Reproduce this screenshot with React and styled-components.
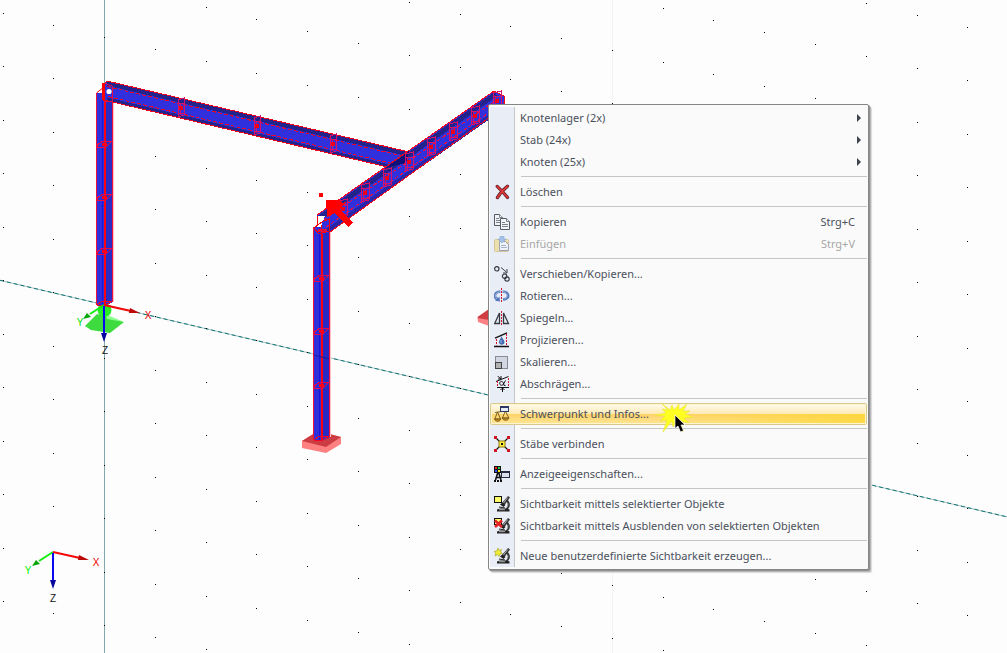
import React from "react";
import styled, { createGlobalStyle } from "styled-components";

const GlobalStyle = createGlobalStyle`
  body {
    margin: 0;
    background: #fdfdfd;
    font-family: "Noto Sans", "Open Sans", sans-serif;
  }
`;

const Workspace = styled.main`
  position: relative;
  min-height: 100vh;
  overflow: hidden;
  display: flex;
`;

const Viewport = styled.svg`
  flex: 1;
  min-width: 0;
  display: block;
`;

const AxisLabel = styled.text`
  font-family: "Liberation Sans", sans-serif;
  font-size: 10px;
  text-anchor: middle;
  fill: ${(p) => p.$color};
`;

const ContextMenu = styled.div`
  position: absolute;
  left: 488px;
  top: 104px;
  box-sizing: border-box;
  width: 381px;
  padding: 2px 1px;
  border: 1px solid #868686;
  border-radius: 2px;
  background: #fafafa;
  box-shadow: 1px 1px 0 #909090, 2px 2px 1px #b4b4b4, 3px 3px 1px #dcdcdc;
`;

const MenuList = styled.div`
  display: flex;
  flex-direction: column;
  background: linear-gradient(to right, #e9edf6 24px, #c5c5c5 24px, #c5c5c5 25px, transparent 25px);
`;

const Divider = styled.hr`
  box-sizing: border-box;
  width: auto;
  height: 1px;
  margin: 3px 0 4px 31px;
  border: 0;
  background: #c5c5c5;
`;

const MenuItem = styled.button`
  box-sizing: border-box;
  display: grid;
  grid-template-columns: 30px 1fr auto;
  align-items: center;
  width: 100%;
  height: 22px;
  padding: 0 12px 0 0;
  border: 0;
  border-radius: 2px;
  background: ${(p) =>
    p.$active
      ? "linear-gradient(to right, rgba(255,216,50,0) 45%, rgba(255,214,45,0.75)) 0 11px / 100% 11px no-repeat, linear-gradient(#fffdf3, #fdeab5 49%, #fed268 50%, #fee798)"
      : "transparent"};
  box-shadow: ${(p) => (p.$active ? "inset 0 0 0 1px #d9c98d, inset 0 0 0 2px #fff6d0" : "none")};
  color: ${(p) => (p.disabled ? "#a7a7a7" : "#4b505c")};
  font-family: inherit;
  font-size: 11px;
  line-height: 16px;
  text-align: left;
  white-space: nowrap;
`;

const IconCell = styled.span`
  display: flex;
  padding-left: 4px;
  opacity: ${(p) => (p.$faded ? 0.6 : 1)};
`;

const Shortcut = styled.span`
  font-size: 11px;
`;

const SubmenuArrow = styled.span`
  width: 0;
  height: 0;
  margin-right: -8px;
  border-style: solid;
  border-width: 4px 0 4px 4px;
  border-color: transparent transparent transparent #3d424d;
  transform: translateX(2px);
`;

const Pointer = styled.svg`
  position: absolute;
  left: 654px;
  top: 402px;
  pointer-events: none;
`;

/* ---------- menu icons, all on a 16 x 16 grid ---------- */

const Microscope = () => (
  <g>
    <path d="M14 0L16 1.5L10.5 9L7.5 7.5Z" fill="#333" />
    <path d="M13.6 1.6L9.2 7.4" stroke="#b5b5b5" strokeWidth="1" />
    <path d="M6 8.5L8.5 6.5L11.5 9L9.5 11Z" fill="#222" />
    <path d="M13 4.5C16 8 15 11 12.5 13.5" stroke="#333" strokeWidth="2" fill="none" />
    <path d="M13.8 7C14.5 9 13.5 11 12 12.5" stroke="#999" strokeWidth="0.6" fill="none" />
    <path d="M5 11L11 12" stroke="#222" strokeWidth="1.2" />
    <path d="M3 13.5L6 12.5H13L15.5 13.5V15.5H3Z" fill="#222" />
    <path d="M5 13.7H11" stroke="#bbb" strokeWidth="0.9" />
  </g>
);

const RedDash = ({ x, y1, y2 }) => (
  <path d={`M${x} ${y1}V${y2}`} stroke="#d3122b" strokeWidth="1" strokeDasharray="2 1" />
);

const icons = {
  remove: (
    <g fill="none" strokeLinecap="round">
      <path d="M3.2 2.4C6 5 10 9 13.5 13.5M13.5 2.2C10 5 6 9 3.4 13.6" stroke="#5c1a22" strokeWidth="3.2" />
      <path d="M3.2 2.4C6 5 10 9 13.5 13.5M13.5 2.2C10 5 6 9 3.4 13.6" stroke="#e0393c" strokeWidth="1.8" />
    </g>
  ),
  copy: (
    <g stroke="#555b61" fill="#f1f3f6">
      <path d="M0.5 0.5H5.5L8.5 3.5V11.5H0.5Z" />
      <path d="M5.5 0.5V3.5H8.5M2 4.5H5M2 6.5H6M2 8.5H6" stroke="#7c8289" />
      <path d="M6.5 4.5H12.5L15.5 7.5V15.5H6.5Z" />
      <path d="M12.5 4.5V7.5H15.5M8 8.5H11M8 10.5H14M8 12.5H14" stroke="#7c8289" />
    </g>
  ),
  paste: (
    <g>
      <rect x="0.5" y="3.5" width="14" height="12" rx="1" fill="#edd67d" stroke="#c3ad5c" />
      <path d="M5.5 5.5H11.5L14.5 8.5V14.5H5.5Z" fill="#f4f6fa" stroke="#687083" />
      <path d="M7 9.5H12M7 11.5H13" stroke="#7c8ba3" />
      <path d="M6 0.5H10V3H12L8 7L4 3H6Z" fill="#79a5df" stroke="#4776bb" strokeWidth="0.6" />
    </g>
  ),
  move: (
    <g fill="none" stroke="#383d48">
      <circle cx="2.8" cy="2.8" r="2.2" strokeWidth="1.2" />
      <path d="M7 1.5L12.5 6.2M13 3V7H9" />
      <circle cx="10.6" cy="10.2" r="2.2" strokeWidth="1.2" />
      <circle cx="13" cy="13" r="2.2" strokeWidth="1.2" />
    </g>
  ),
  rotate: (
    <g fill="none">
      <path d="M4 11.500C-1 9.500 0 3.500 7.500 3.500S16 9.500 11 11.200L9 11.600" stroke="#5478bb" strokeWidth="2.6" />
      <path d="M3 10.800C-0.500 8.500 1.500 3.500 7.500 3.500S15 9.500 10.500 11.200" stroke="#a3bce6" strokeWidth="1" />
      <path d="M1 12.800L6 13.500L5.500 8.500Z" fill="#5478bb" />
      <path d="M7.5 0V15" stroke="#e9edf6" strokeWidth="2" />
      <RedDash x={7.5} y1={0} y2={15} />
    </g>
  ),
  mirror: (
    <g fill="none" stroke="#333842">
      <path d="M0.7 13.5H5.5V3Z M9.5 3V13.5H14.5Z" strokeWidth="1.3" />
      <RedDash x={7.5} y1={1} y2={16} />
    </g>
  ),
  project: (
    <g fill="none">
      <path d="M1 6.2L13 0.8M0 14.5H15" stroke="#111" strokeWidth="1.3" />
      <RedDash x={2.5} y1={7} y2={13.5} />
      <RedDash x={12.5} y1={2} y2={13.5} />
      <path d="M7.500 4C8 6.500 10.500 8 10.500 10C10.500 13.500 5 13.500 5 10C5 8 7 6.500 7.500 4Z" fill="#4369b3" />
      <path d="M7 8V11" stroke="#9eb9e8" />
    </g>
  ),
  scale: (
    <g>
      <rect x="1.5" y="2.5" width="12" height="12" fill="#d2d6e2" stroke="#30343c" strokeDasharray="1 1" />
      <rect x="1.5" y="8.5" width="6" height="6" fill="#b2b2b2" stroke="#444" />
    </g>
  ),
  bevel: (
    <g fill="none" stroke="#111">
      <path d="M2 5.5L14.5 0.5M3 11.5H15M8.5 16V12M6.5 14L8.5 12L10.5 14M3.5 0L7 3M7 0V3H4" />
      <path d="M11.5 4.5L9.5 8C8.5 10 5.5 9.5 5.7 7.2C5.9 5 8.7 4.7 9.3 7L10 9.4H11.5" />
      <RedDash x={3.5} y1={5} y2={11} />
      <RedDash x={14.5} y1={2} y2={11} />
    </g>
  ),
  balance: (
    <g fill="none" stroke="#806018">
      <path d="M1 6.5L14 4.5M3.5 6L0.8 13H6.5L3.5 6M11.5 5L8.3 12H14.8L11.5 5" />
      <path d="M0.5 13H6.8C6 16 1.5 16 0.5 13ZM8 12H15C14 15 9.5 15 8 12Z" fill="#c58d22" />
      <rect x="6.5" y="0.5" width="8" height="5" fill="#e5eaf8" stroke="#2b3765" />
      <path d="M6 1H15" stroke="#2b3765" strokeWidth="2" />
    </g>
  ),
  connect: (
    <g>
      <path d="M1 1L15 15M15 1L1 15" stroke="#111" strokeWidth="1.2" />
      <path d="M0 0H3V3H0ZM13 0H16V3H13ZM0 13H3V16H0ZM13 13H16V16H13Z" fill="#d31420" />
      <rect x="5" y="5" width="6" height="6" fill="#fff23a" stroke="#8d7a16" />
      <rect x="7" y="7" width="2" height="2" fill="#111" />
    </g>
  ),
  display: (
    <g>
      <path d="M0 0H7V7H0Z" fill="#111" />
      <path d="M1 1H3V3H1Z" fill="#f52727" />
      <path d="M4 1H6V3H4Z" fill="#23cf45" />
      <path d="M1 4H3V6H1Z" fill="#3154ff" />
      <path d="M4 4H6V6H4Z" fill="#ffe523" />
      <path d="M1.500 14L3.500 7.500H5L7 14M2.500 11.500H6.500" stroke="#111" strokeWidth="1.6" fill="none" />
      <path d="M0 15H9" stroke="#111" strokeWidth="2" strokeDasharray="2 1" />
      <rect x="7.5" y="5.5" width="8" height="6" fill="#dcdfe9" stroke="#252b42" />
      <path d="M7 6H16" stroke="#252b42" strokeWidth="2" />
    </g>
  ),
  show: (
    <g>
      <Microscope />
      <rect x="0.5" y="0.5" width="7" height="6" fill="#ffff69" stroke="#111" />
    </g>
  ),
  hide: (
    <g>
      <Microscope />
      <rect x="0.5" y="0.5" width="7" height="6" fill="#ffff69" stroke="#111" />
      <path d="M1 2.500L8 9M8 2.500L1 9" stroke="#e12228" strokeWidth="2.6" />
    </g>
  ),
  create: (
    <g>
      <Microscope />
      <path d="M4 0L5 2.5L7.5 1.5L6.5 4L8.5 5.5L6 6L5 8.5L3.5 6.5L1 8L1.8 5.2L0 3.5L2.8 3Z" fill="#efed32" stroke="#a9a92b" strokeWidth="0.7" />
    </g>
  ),
};

const Icon = ({ name }) => (
  <svg width="16" height="16" viewBox="0 0 16 16" aria-hidden="true">
    {icons[name]}
  </svg>
);

/* ---------- 3D model ---------- */

const COLUMN_STEP = 50.78;
const ROW_STEP = 53.5;
const gridDots = [];
for (let i = 0; i < 60; i++) {
  const first = (13 + 12 * i) % ROW_STEP;
  for (let j = 0; j < 40; j++) {
    gridDots.push([Math.floor(3 + COLUMN_STEP * i), Math.floor(first + ROW_STEP * j)]);
  }
}

const Post = ({ x, top, bottom, rings }) => (
  <g shapeRendering="crispEdges">
    <path d={`M${x - 7} ${top}H${x + 9}V${bottom - 3}L${x + 1} ${bottom + 1}H${x - 7}Z`} fill="#2f2fdc" />
    <path d={`M${x + 5} ${top + 2}V${bottom - 3}`} stroke="#2a2ac4" strokeWidth="6" />
    <path d={`M${x - 1.5} ${top}V${bottom}`} stroke="#1717df" />
    <path d={`M${x + 9.5} ${top + 2}V${bottom - 3}`} stroke="#ffc0c8" />
    <path d={`M${x - 7.5} ${top}V${bottom}M${x + 8.5} ${top + 2}V${bottom - 3}`} stroke="#f0103c" />
    <path d={`M${x + 0.5} ${top - 3}V${bottom}`} stroke="#ff0010" strokeWidth="2" />
    <path d={`M${x - 7} ${bottom}L${x - 2} ${bottom - 4}L${x + 8} ${bottom - 4}L${x} ${bottom + 1}Z`} fill="none" stroke="#f30722" />
    {rings.map((y) => (
      <g key={y} stroke="#e80b4b" fill="none">
        <path d={`M${x - 7} ${y + 1}L${x - 1} ${y - 3}L${x + 8} ${y - 3}L${x + 2} ${y + 3}L${x - 6} ${y + 4}Z`} />
        <path d={`M${x - 2} ${y + 0.5}H${x + 3}`} stroke="#ff0018" strokeWidth="3" />
      </g>
    ))}
  </g>
);

const Joint = ({ x, y, w = 3 }) => (
  <g fill="none" stroke="#d8126b">
    <path d={`M${x - w} ${y - 8}L${x + w} ${y - 10}V${y + 7}L${x - w} ${y + 9}Z`} />
    <path d={`M${x - w + 2} ${y - 5}V${y + 7}M${x - w} ${y - 5}H${x + w}M${x - w} ${y + 5}H${x + w}`} />
    <rect x={x - 2} y={y - 2} width="4" height="4" fill="#f00018" stroke="none" />
  </g>
);

const Triad = ({ x, y, z = 25 }) => (
  <g>
    <path d={`M${x} ${y}L${x - 14} ${y + 9}`} stroke="#12ed12" strokeWidth="2" />
    <path d={`M${x - 21} ${y + 14}L${x - 17} ${y + 8}L${x - 13} ${y + 12}Z`} fill="#07a507" />
    <path d={`M${x} ${y}L${x + 27} ${y + 6}`} stroke="#f40808" strokeWidth="2" />
    <path d={`M${x + 36} ${y + 8}L${x + 26} ${y + 3}L${x + 25} ${y + 8}Z`} fill="#bd0909" />
    <path d={`M${x} ${y + 1}V${y + z + 4}`} stroke="#0808f2" strokeWidth="2" />
    <path d={`M${x - 3} ${y + z + 3}H${x + 3}L${x} ${y + z + 12}Z`} fill="#06069c" />
  </g>
);

const Model = () => (
  <Viewport role="img" aria-label="3D Rahmenmodell">
    <path d="M612.5 0V2000" stroke="#f2f2f2" />
    <path d="M104.5 0V2000" stroke="#82a9ab" />
    <path d="M0 280.3L3021 990" stroke="#a5c1c1" />
    <path d="M0 280.3L3021 990" stroke="#0c7474" strokeDasharray="4 3" />
    <g fill="#000">
      {gridDots.map(([x, y]) => (
        <rect key={`${x}-${y}`} x={x} y={y} width="1" height="1" />
      ))}
    </g>

    <g>
      <path d="M85 326L97 314L124 322L110 333L91 330Z" fill="#3ddb3d" />
      <path d="M105 314L124 322L107 319Z" fill="#8cff8c" />
      <circle cx="104.5" cy="310" r="7" fill="#27ed27" />
    </g>
    <Post x={104} top={93} bottom={305} rings={[144, 197, 251]} />
    <path d="M96.5 93L104 87V95M102.5 83V100" stroke="#f00" fill="none" />

    <g shapeRendering="crispEdges">
      <path d="M107 81L409 152V172L385 167L104 100V84Z" fill="#3030dc" />
      <path d="M107 83.500L409 154.500" stroke="#23238c" strokeWidth="4" />
      <path d="M107 99L400 168.500" stroke="#23238c" strokeWidth="3" />
      <path d="M104 84L107 81L409 152M104 100L400 170" stroke="#f00520" fill="none" />
      <path d="M107 86.500L409 157.500M108 96.500L409 167.500" stroke="#f00028" strokeDasharray="4 2" />
      <Joint x={181} y={108} />
      <Joint x={257} y={126} />
      <Joint x={333} y={144} />
      <path d="M104 83V101H112V86Z" fill="none" stroke="#e90946" />
      <path d="M104 83V101" stroke="#f00" strokeWidth="2" />
    </g>
    <circle cx="109" cy="91.500" r="2.600" fill="#fff" />

    <path d="M477.500 317L489 309V322H479Z" fill="#cf3d43" />
    <path d="M477.500 318L489 320V326L478 322Z" fill="#fb8184" />

    <g>
      <path d="M302 441L318 431L341 437V444L326 453L302 448Z" fill="#ff8080" />
      <path d="M302 441L318 431L341 437L326 447Z" fill="#cb3d42" />
      <Post x={321} top={227} bottom={440} rings={[278, 331, 385]} />
      <path d="M314 355L329 359" stroke="#1b1b9d" />
    </g>

    <g shapeRendering="crispEdges">
      <path d="M317 215L494 91L505 97V107L330 232L322 234V221Z" fill="#3030dc" />
      <path d="M320 217.500L496 94" stroke="#23238c" strokeWidth="5" />
      <path d="M327 231L504 106.500" stroke="#2727a8" strokeWidth="4" />
      <path d="M385 168L409 151L406 163Z" fill="#10107a" />
      <path d="M317 215L494 91L504 96V107L330 232" stroke="#f80520" fill="none" />
      <path d="M324 220L502 96M326 227L504 102" stroke="#f00d3b" strokeDasharray="4 2" />
      {[[343, 209], [365, 193], [387, 178], [409, 162], [431, 147], [453, 132], [475, 116], [497, 101]].map(([x, y]) => (
        <Joint key={x} x={x} y={y} w={4} />
      ))}
      <path d="M318 216H325L321 226H318Z" fill="#fdfdfd" />
      <path d="M317 216V226M314 228L322 222L329 219V231L319 234Z" stroke="#f00" fill="none" />
      <path d="M318 230H327" stroke="#e5113c" strokeWidth="3" />
      <rect x="319" y="193" width="4" height="4" fill="#f00" />
      <path d="M326 200H339L342 203L346 202L340 209L353 223L348 227L335 213L327 217V208H326Z" fill="#f00" />
    </g>

    <Triad x={104} y={305} />
    <AxisLabel x="148" y="319" $color="#e00000">X</AxisLabel>
    <AxisLabel x="80" y="326" $color="#00e000">Y</AxisLabel>
    <AxisLabel x="105" y="354" $color="#151515">Z</AxisLabel>

    <Triad x={53} y={552} />
    <AxisLabel x="96" y="566" $color="#f00000">X</AxisLabel>
    <AxisLabel x="28" y="574" $color="#00f000">Y</AxisLabel>
    <AxisLabel x="53" y="602" $color="#151515">Z</AxisLabel>
  </Viewport>
);

const menuGroups = [
  [
    { label: "Knotenlager (2x)", submenu: true },
    { label: "Stab (24x)", submenu: true },
    { label: "Knoten (25x)", submenu: true },
  ],
  [{ label: "Löschen", icon: "remove" }],
  [
    { label: "Kopieren", icon: "copy", shortcut: "Strg+C" },
    { label: "Einfügen", icon: "paste", shortcut: "Strg+V", disabled: true },
  ],
  [
    { label: "Verschieben/Kopieren...", icon: "move" },
    { label: "Rotieren...", icon: "rotate" },
    { label: "Spiegeln...", icon: "mirror" },
    { label: "Projizieren...", icon: "project" },
    { label: "Skalieren...", icon: "scale" },
    { label: "Abschrägen...", icon: "bevel" },
  ],
  [{ label: "Schwerpunkt und Infos...", icon: "balance", active: true }],
  [{ label: "Stäbe verbinden", icon: "connect" }],
  [{ label: "Anzeigeeigenschaften...", icon: "display" }],
  [
    { label: "Sichtbarkeit mittels selektierter Objekte", icon: "show" },
    { label: "Sichtbarkeit mittels Ausblenden von selektierten Objekten", icon: "hide" },
  ],
  [{ label: "Neue benutzerdefinierte Sichtbarkeit erzeugen...", icon: "create" }],
];

export default function App() {
  return (
    <Workspace>
      <GlobalStyle />
      <Model />
      <ContextMenu>
        <MenuList role="menu">
          {menuGroups.map((group, index) => (
            <React.Fragment key={group[0].label}>
              {index > 0 && <Divider />}
              {group.map((item) => (
                <MenuItem
                  key={item.label}
                  type="button"
                  role="menuitem"
                  disabled={item.disabled}
                  aria-haspopup={item.submenu ? "menu" : undefined}
                  $active={item.active}
                >
                  <IconCell $faded={item.disabled}>{item.icon && <Icon name={item.icon} />}</IconCell>
                  <span>{item.label}</span>
                  {item.shortcut && <Shortcut>{item.shortcut}</Shortcut>}
                  {item.submenu && <SubmenuArrow />}
                </MenuItem>
              ))}
            </React.Fragment>
          ))}
        </MenuList>
      </ContextMenu>
      <Pointer width="42" height="34" viewBox="0 0 42 34" aria-hidden="true">
        <path
          d="M7 1L16 8L18 3L20 8L25 2L25 8L33 2L29 9L36 9L31 12L39 15L30 16L35 21L27 19L29 30L23 20L19 25L18 19L9 30L13 18L6 19L11 14L1 13L12 11L8 7L14 8Z"
          fill="#ffff21"
          stroke="#e8e33c"
          strokeWidth="0.6"
        />
        <path d="M21 13V26.500L24 24L26.500 30L29.500 28.500L27 23H31Z" fill="#000" stroke="#fff" strokeWidth="0.7" />
      </Pointer>
    </Workspace>
  );
}
